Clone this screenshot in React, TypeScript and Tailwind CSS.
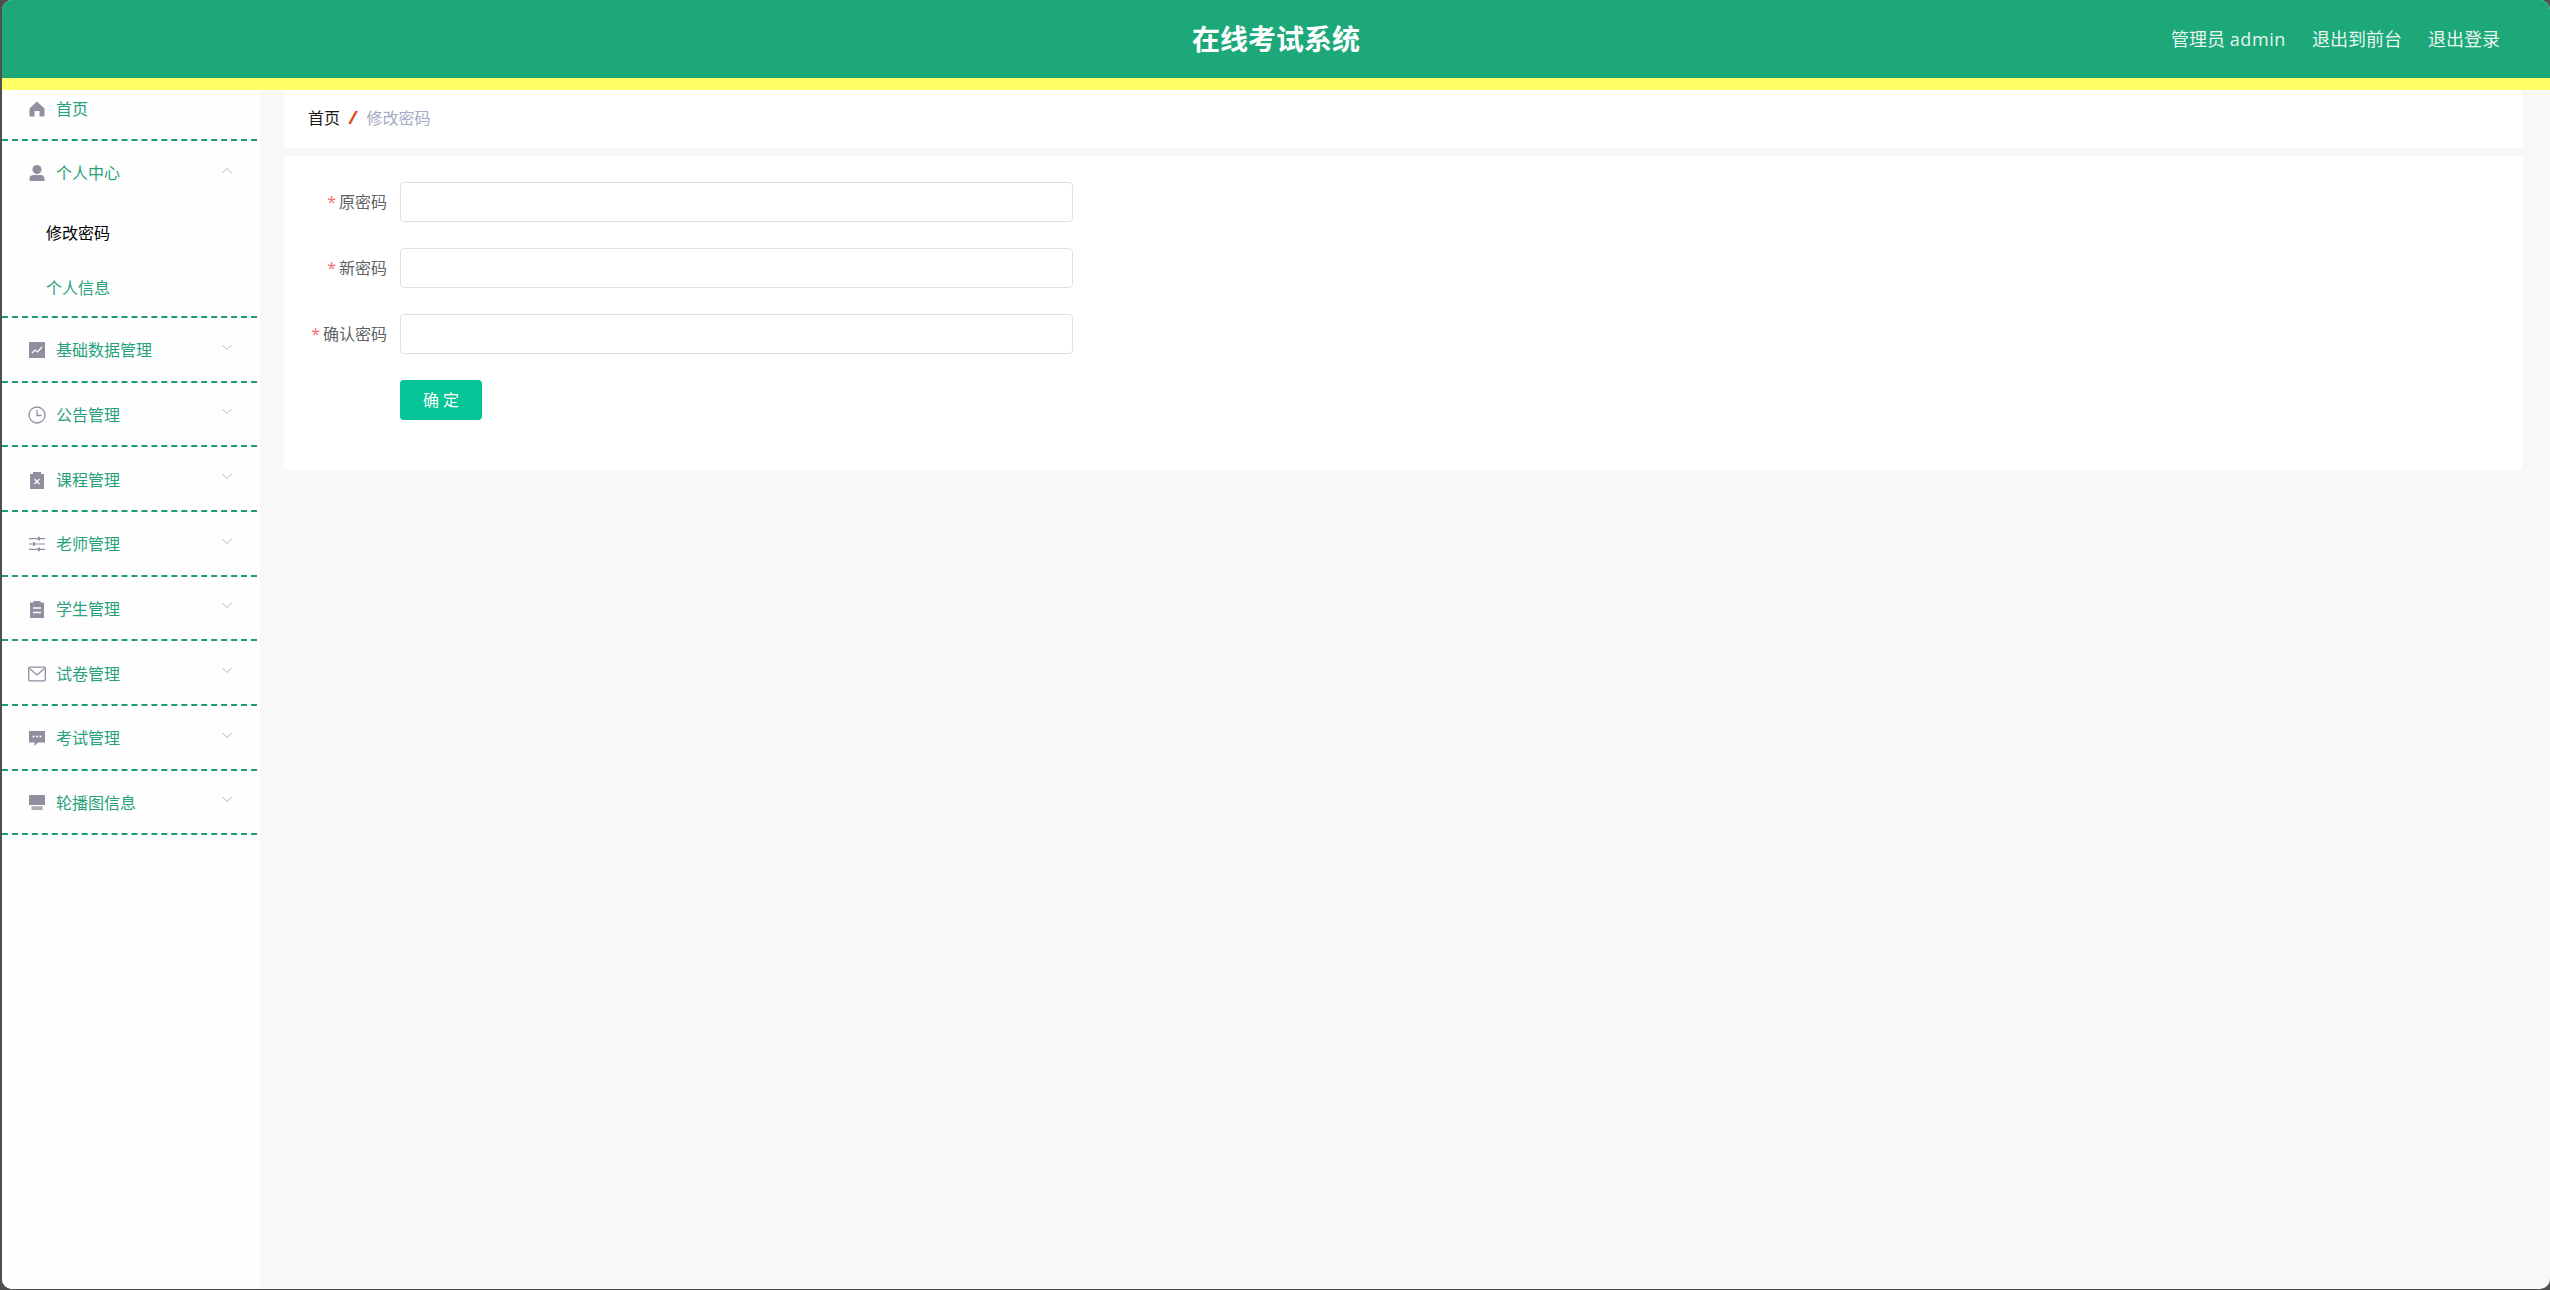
import type { ReactNode } from 'react'

const cjk = { fontFamily: '"Open Sans", "Noto Sans CJK SC", sans-serif' }

const ChevronDown = () => (
  <svg viewBox="0 0 12 12" className="w-3 h-3 -mt-[7px] text-[#b4b4bc]" fill="none" stroke="currentColor" strokeWidth="1">
    <path d="M1.5 4l4.5 4.5L10.5 4" />
  </svg>
)

const ChevronUp = () => (
  <svg viewBox="0 0 12 12" className="w-3 h-3 -mt-[5px] text-[#b4b4bc]" fill="none" stroke="currentColor" strokeWidth="1">
    <path d="M1.5 8L6 3.5 10.5 8" />
  </svg>
)

const iconClass = 'w-[18px] h-[18px] text-[#8f8f9f]'

const HomeIcon = () => (
  <svg viewBox="0 0 18 18" className={iconClass} fill="currentColor">
    <path d="M9 1.5L1.5 8.5v8h5V11h5v5.5h5v-8z" />
  </svg>
)

const UserIcon = () => (
  <svg viewBox="0 0 18 18" className={iconClass} fill="currentColor">
    <circle cx="9" cy="5.5" r="4.5" />
    <path d="M1.5 17v-2.5c0-2.5 2-3.5 4-3.5h7c2 0 4 1 4 3.5V17z" />
  </svg>
)

const DataIcon = () => (
  <svg viewBox="0 0 18 18" className={iconClass}>
    <rect x="1" y="1" width="16" height="16" fill="currentColor" />
    <path d="M4 12l3-3 2.5 2L14 6" fill="none" stroke="#fff" strokeWidth="1.2" />
  </svg>
)

const ClockIcon = () => (
  <svg viewBox="0 0 18 18" className={iconClass} fill="none" stroke="currentColor" strokeWidth="1.3">
    <circle cx="9" cy="9" r="8" />
    <path d="M9 4v5.5h4.5" />
  </svg>
)

const ReleaseIcon = () => (
  <svg viewBox="0 0 18 18" className={iconClass}>
    <path d="M2 3h3V1h8v2h3v15H2z" fill="currentColor" />
    <path d="M6.5 8l5 5M11.5 8l-5 5" stroke="#fff" strokeWidth="1.2" />
  </svg>
)

const OperationIcon = () => (
  <svg viewBox="0 0 18 18" className={iconClass} fill="currentColor">
    <path d="M1 3h16v1.2H1zM1 8.4h16v1.2H1zM1 13.8h16V15H1z" />
    <rect x="10" y="1.8" width="2" height="3.6" />
    <rect x="5" y="7.2" width="2" height="3.6" />
    <rect x="10" y="12.6" width="2" height="3.6" />
  </svg>
)

const OrderIcon = () => (
  <svg viewBox="0 0 18 18" className={iconClass}>
    <path d="M2 2.5h3.5V1h7v1.5H16V18H2z" fill="currentColor" />
    <path d="M5 8h8M5 12.5h8" stroke="#fff" strokeWidth="1.3" />
  </svg>
)

const MailIcon = () => (
  <svg viewBox="0 0 18 18" className={iconClass} fill="none" stroke="currentColor" strokeWidth="1.3">
    <rect x="0.7" y="2.2" width="16.6" height="13.6" rx="1" />
    <path d="M1.5 3.5L9 10l7.5-6.5" />
  </svg>
)

const CommentIcon = () => (
  <svg viewBox="0 0 18 18" className={iconClass}>
    <path d="M1 2h16v11.5h-7L6.5 17v-3.5H1z" fill="currentColor" />
    <circle cx="5.5" cy="7.5" r="1" fill="#fff" />
    <circle cx="9" cy="7.5" r="1" fill="#fff" />
    <circle cx="12.5" cy="7.5" r="1" fill="#fff" />
  </svg>
)

const PlatformIcon = () => (
  <svg viewBox="0 0 18 18" className={iconClass} fill="currentColor">
    <path d="M2 1h14a1 1 0 011 1v9H1V2a1 1 0 011-1z" />
    <path d="M3.5 12.2h11V16h-11z" opacity="0.75" />
  </svg>
)

const menus: { label: string; icon: ReactNode }[] = [
  { label: '基础数据管理', icon: <DataIcon /> },
  { label: '公告管理', icon: <ClockIcon /> },
  { label: '课程管理', icon: <ReleaseIcon /> },
  { label: '老师管理', icon: <OperationIcon /> },
  { label: '学生管理', icon: <OrderIcon /> },
  { label: '试卷管理', icon: <MailIcon /> },
  { label: '考试管理', icon: <CommentIcon /> },
  { label: '轮播图信息', icon: <PlatformIcon /> },
]

const fields = [
  { label: '原密码' },
  { label: '新密码' },
  { label: '确认密码' },
]

export default function App() {
  return (
    <div className="w-[2550px] h-[1290px] overflow-hidden bg-[#4f4f4f]" style={cjk}>
      <div className="h-[1289px] ml-[2px] rounded-[10px] overflow-hidden bg-[#f8f8f8] flex flex-col">
        <header className="relative h-[78px] bg-[#1ca879] flex items-center justify-end pr-[50px] shrink-0">
          <div className="absolute left-[1190px] top-[19px] text-[28px] leading-[40px] font-bold text-white">在线考试系统</div>
          <div className="flex items-center gap-[26px] text-[18px] leading-[24px] text-[#e8f5f0]">
            <span>管理员 <span className="tracking-[0.6px]">admin</span></span>
            <span>退出到前台</span>
            <span>退出登录</span>
          </div>
        </header>
        <div className="h-[12px] bg-[#ffff66] shrink-0" />
        <div className="flex flex-1 min-h-0">
          <aside className="w-[258px] bg-[#fefefe] shrink-0 text-[16px] text-[#26a17b]">
            <div className="w-[255px]">
              <div className="h-[51px] flex items-center gap-[10px] pl-[26px] pb-[12px] border-b-2 border-dashed border-[#1f9a78]">
                <HomeIcon />
                <span>首页</span>
              </div>
              <div className="border-b-2 border-dashed border-[#1f9a78]">
                <div className="h-[64px] flex items-center gap-[10px] pl-[26px] pr-[24px]">
                  <UserIcon />
                  <span className="flex-1">个人中心</span>
                  <ChevronUp />
                </div>
                <div className="h-[55px] flex items-center pl-[44px] text-black">修改密码</div>
                <div className="h-[56px] flex items-center pl-[44px]">个人信息</div>
              </div>
              {menus.map((m) => (
                <div key={m.label} className="h-[64.67px] flex items-center gap-[10px] pl-[26px] pr-[24px] pt-[2px] border-b-2 border-dashed border-[#1f9a78]">
                  {m.icon}
                  <span className="flex-1">{m.label}</span>
                  <ChevronDown />
                </div>
              ))}
            </div>
          </aside>
          <main className="flex-1 min-w-0 pl-[24px] pr-[27px]">
            <div className="h-[58px] bg-white flex items-center pl-[24px] pb-[3px] text-[16px]">
              <span className="text-[#1a1a1a]">首页</span>
              <span className="ml-[9px] mr-[10px] text-[18px] text-[#e0491f] font-bold italic">/</span>
              <span className="text-[#a3aac4]">修改密码</span>
            </div>
            <div className="mt-[8px] h-[314px] bg-white pt-[26px]">
              <form className="flex flex-col gap-[26px]">
                {fields.map((f) => (
                  <div key={f.label} className="flex items-center">
                    <label className="w-[103px] text-right text-[16px] text-[#606266]">
                      <span className="text-[#f56c6c] mr-[3px]">*</span>
                      {f.label}
                    </label>
                    <input type="password" className="ml-[13px] w-[673px] h-[40px] rounded-[4px] border border-[#dcdfe6] bg-white" />
                  </div>
                ))}
                <div className="pl-[116px]">
                  <button type="button" className="w-[82px] h-[40px] rounded-[4px] bg-[#05c495] text-white text-[16px]">确 定</button>
                </div>
              </form>
            </div>
          </main>
        </div>
      </div>
    </div>
  )
}
